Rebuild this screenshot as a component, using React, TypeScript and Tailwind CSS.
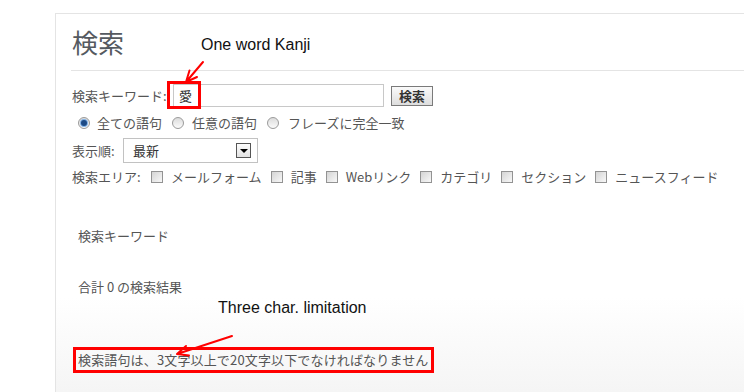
const jp = "font-['Noto_Sans_CJK_JP',sans-serif]"

function Radio({ checked }: { checked?: boolean }) {
  return (
    <span className="w-[12px] h-[12px] rounded-full border border-[#9a9a9a] bg-gradient-to-b from-[#dcdcdc] to-[#fbfbfb] flex items-center justify-center shrink-0">
      {checked && <span className="w-[6px] h-[6px] rounded-full bg-[#1c4a86] ring-1 ring-[#7fb0e6]" />}
    </span>
  )
}

function Check() {
  return (
    <span className="w-[12px] h-[12px] border border-[#939393] bg-gradient-to-br from-[#d4d4d4] to-[#f8f8f8] shrink-0" />
  )
}

const areas = ['メールフォーム', '記事', 'Webリンク', 'カテゴリ', 'セクション', 'ニュースフィード']

export default function App() {
  return (
    <div className={`relative w-[744px] h-[392px] overflow-hidden bg-white text-[#555] text-[13px] ${jp}`}>
      <div className="ml-[55px] mt-[13px] h-[379px] border-l border-t border-[#e4e4e4] bg-gradient-to-b from-white from-[75%] to-[#f5f5f5]">
        <div className="pl-[16px]">
          <h1 className="mt-[13px] h-[30px] leading-[30px] text-[26px] text-[#555a60]">検索</h1>
          <div className="mt-[13px] -ml-[1px] border-t border-[#e4e4e4]" />

          {/* keyword row */}
          <div className="mt-[13px] h-[23px] flex items-center">
            <span className="w-[101px] leading-[18px]">検索キーワード:</span>
            <div className="w-[211px] h-[23px] border border-[#c8c8c8] flex items-center pl-[5px] text-[#333]">愛</div>
            <button className="ml-[7px] w-[42px] h-[20px] border border-[#7a7a7a] bg-gradient-to-b from-[#fafafa] to-[#dedede] text-[#333] font-bold leading-[18px]">
              検索
            </button>
          </div>

          {/* radios */}
          <div className="mt-[7px] h-[18px] flex items-center pl-[6px] leading-[18px]">
            <Radio checked />
            <span className="ml-[7px] mr-[10px]">全ての語句</span>
            <Radio />
            <span className="ml-[8px] mr-[10px]">任意の語句</span>
            <Radio />
            <span className="ml-[9px]">フレーズに完全一致</span>
          </div>

          {/* order */}
          <div className="mt-[6px] h-[25px] flex items-center leading-[18px]">
            <span className="w-[51px]">表示順:</span>
            <div className="w-[135px] h-[25px] border border-[#c2c2c2] flex items-center justify-between pl-[9px] pr-[6px] text-[#333]">
              <span>最新</span>
              <span className="w-[15px] h-[15px] border border-[#555] bg-gradient-to-b from-[#fdfdfd] to-[#e2e2e2] flex items-center justify-center">
                <span className="w-0 h-0 border-l-[4px] border-r-[4px] border-t-[4px] border-l-transparent border-r-transparent border-t-black" />
              </span>
            </div>
          </div>

          {/* areas */}
          <div className="mt-[6px] h-[16px] flex items-center leading-[16px] whitespace-nowrap">
            <span className="w-[79px]">検索エリア:</span>
            {areas.map((a) => (
              <span key={a} className="flex items-center">
                <Check />
                <span className="ml-[8px] mr-[9px]">{a}</span>
              </span>
            ))}
          </div>

          <div className="pl-[6px]">
            <div className="mt-[42px] h-[18px] leading-[18px]">検索キーワード</div>
            <div className="mt-[33px] h-[18px] leading-[18px]">合計 0 の検索結果</div>
          </div>

          <div className="mt-[51px] ml-[1px] w-[361px] h-[26px] border-[3px] border-[#ff0000] flex items-center pl-[2px] tracking-[0.15px] leading-[18px] whitespace-nowrap">
            検索語句は、3文字以上で20文字以下でなければなりません
          </div>
        </div>
      </div>

      {/* annotations */}
      <div className="absolute left-[167px] top-[81px] w-[34px] h-[28px] border-[3px] border-[#ff0000]" />
      <div className="absolute left-[201px] top-[36px] text-[16px] leading-[18px] text-[#111] font-['Liberation_Sans',Arial,sans-serif]">
        One word Kanji
      </div>
      <div className="absolute left-[218px] top-[299px] text-[16px] leading-[18px] text-[#111] font-['Liberation_Sans',Arial,sans-serif]">
        Three char. limitation
      </div>
      <svg className="absolute left-0 top-0" width="744" height="392" fill="none" stroke="#ff0000" strokeWidth="2" strokeLinecap="round">
        <path d="M203 62 L186 82 M186 82 L197 77 M186 82 L189.5 70.5" />
        <path d="M232 336 L177 354 M177 354 L189 355.5 M177 354 L186 346" />
      </svg>
    </div>
  )
}
